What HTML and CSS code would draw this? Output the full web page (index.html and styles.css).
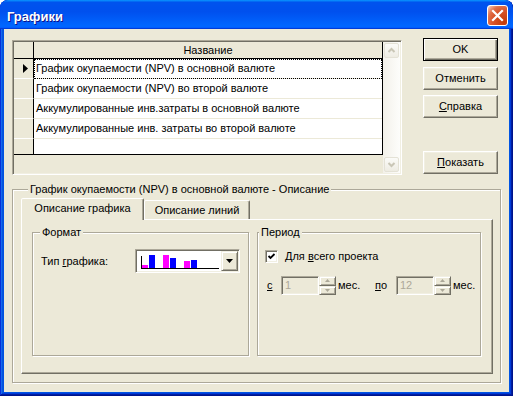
FILE: index.html
```html
<!DOCTYPE html>
<html lang="ru">
<head>
<meta charset="utf-8">
<title>Графики</title>
<link rel="stylesheet" href="styles.css">
</head>
<body>
<div class="window">
  <div class="titlebar">
    <span class="title">Графики</span>
    <span class="close">
      <svg width="19" height="19" viewBox="0 0 19 19"><path d="M5 5 L14 14 M14 5 L5 14" stroke="#fff" stroke-width="2.2" stroke-linecap="square"/></svg>
    </span>
  </div>
  <div class="client">
    <div class="top">
      <div class="dbgrid">
        <div class="grid-area">
          <div class="grid-table">
            <div class="row hdr"><div class="ind"></div><div class="cell hcell">Название</div></div>
            <div class="row"><div class="ind"><svg width="19" height="19" viewBox="0 0 19 19"><polygon points="9,5 14,9.5 9,14" fill="#000"/></svg></div><div class="cell focus">График окупаемости (NPV) в основной валюте</div></div>
            <div class="row"><div class="ind"></div><div class="cell">График окупаемости (NPV) во второй валюте</div></div>
            <div class="row"><div class="ind"></div><div class="cell">Аккумулированные инв.затраты в основной валюте</div></div>
            <div class="row"><div class="ind"></div><div class="cell">Аккумулированные инв. затраты во второй валюте</div></div>
            <div class="row empty"><div class="ind"></div><div class="cell"></div></div>
          </div>
        </div>
        <div class="vscroll">
          <div class="sbtn"><div class="sface"><svg width="13" height="13" viewBox="0 0 13 13"><polyline points="3.5,8 6.5,5 9.5,8" fill="none" stroke="#c9c6b6" stroke-width="2"/></svg></div></div>
          <div class="track"></div>
          <div class="sbtn"><div class="sface"><svg width="13" height="13" viewBox="0 0 13 13"><polyline points="3.5,5 6.5,8 9.5,5" fill="none" stroke="#c9c6b6" stroke-width="2"/></svg></div></div>
        </div>
      </div>
      <div class="buttons">
        <button class="btn default">OK</button>
        <button class="btn">Отменить</button>
        <button class="btn"><u>С</u>правка</button>
        <button class="btn bottom"><u>П</u>оказать</button>
      </div>
    </div>

    <div class="group main-group">
      <div class="group-title">График окупаемости (NPV) в основной валюте - Описание</div>
      <div class="tabs">
        <div class="tab active tab1">Описание графика</div>
        <div class="tab tab2">Описание линий</div>
      </div>
      <div class="panel">
        <div class="group fmt">
          <div class="group-title">Формат</div>
          <div class="fmt-row">
            <span class="lbl-type">Тип <u>г</u>рафика:</span>
            <div class="combo">
              <div class="combo-field">
                <svg width="84" height="20" viewBox="0 0 84 20">
                  <rect x="4" y="5" width="1" height="13" fill="#000"/>
                  <rect x="4" y="17" width="78" height="1" fill="#000"/>
                  <rect x="5" y="14" width="6" height="3" fill="#ff00ff"/>
                  <rect x="12" y="4" width="6" height="13" fill="#0000ff"/>
                  <rect x="26" y="4" width="6" height="13" fill="#ff00ff"/>
                  <rect x="33" y="7" width="6" height="10" fill="#0000ff"/>
                  <rect x="47" y="10" width="6" height="7" fill="#ff00ff"/>
                  <rect x="54" y="9" width="6" height="8" fill="#0000ff"/>
                </svg>
              </div>
              <div class="combo-btn"><svg width="7" height="4" viewBox="0 0 7 4"><polygon points="0,0 7,0 3.5,4" fill="#000"/></svg></div>
            </div>
          </div>
        </div>
        <div class="group period">
          <div class="group-title period-title">Период</div>
          <div class="check-row">
            <span class="checkbox"><svg width="9" height="9" viewBox="0 0 9 9"><polyline points="1.5,4 3.5,6 7.5,2" fill="none" stroke="#000" stroke-width="1.8"/></svg></span>
            <span class="check-label">Для <u>в</u>сего проекта</span>
          </div>
          <div class="range-row">
            <span class="lbl-from"><u>с</u></span>
            <span class="edit">1</span>
            <span class="spin">
              <span class="spin-btn"><svg width="5" height="3" viewBox="0 0 5 3"><polygon points="0,3 5,3 2.5,0" fill="#aca899"/></svg></span>
              <span class="spin-btn"><svg width="5" height="3" viewBox="0 0 5 3"><polygon points="0,0 5,0 2.5,3" fill="#aca899"/></svg></span>
            </span>
            <span class="lbl-mes">мес.</span>
            <span class="lbl-to"><u>п</u>о</span>
            <span class="edit">12</span>
            <span class="spin">
              <span class="spin-btn"><svg width="5" height="3" viewBox="0 0 5 3"><polygon points="0,3 5,3 2.5,0" fill="#aca899"/></svg></span>
              <span class="spin-btn"><svg width="5" height="3" viewBox="0 0 5 3"><polygon points="0,0 5,0 2.5,3" fill="#aca899"/></svg></span>
            </span>
            <span class="lbl-mes2">мес.</span>
          </div>
        </div>
      </div>
    </div>
  </div>
</div>
</body>
</html>
```

FILE: styles.css
```css
* { box-sizing: border-box; }
html, body { margin: 0; padding: 0; }
body {
  width: 513px;
  height: 396px;
  overflow: hidden;
  background: #fff;
  font-family: "Liberation Sans", Arial, sans-serif;
  font-size: 11px;
  line-height: 13px;
  color: #000;
}
u { text-decoration: underline; text-underline-offset: 1px; }

.window {
  width: 513px;
  height: 396px;
  display: flex;
  flex-direction: column;
  background: #0054e3;
  border-radius: 8px 8px 0 0;
  overflow: hidden;
  box-shadow: inset -1px -1px #00138c, inset 1px 1px #0831d9, inset -2px -2px #001ea0, inset 2px 2px #166aee, inset -3px -3px #003bda, inset 3px 3px #0855dd;
}

.titlebar {
  flex: none;
  height: 29px;
  display: flex;
  align-items: flex-start;
  justify-content: space-between;
  padding: 0 5px 0 7px;
  border-radius: 8px 8px 0 0;
  background: linear-gradient(180deg, #0997ff 0%, #0053ee 8%, #0050ee 40%, #0066ff 88%, #0066ff 93%, #005bff 95%, #003dd7 96%, #003dd7 100%);
}
.title {
  margin-top: 9px;
  color: #fff;
  font: bold 13px/15px "Liberation Sans", Arial, sans-serif;
  text-shadow: 1px 1px #0f1089;
}
.close {
  margin-top: 5px;
  width: 21px;
  height: 21px;
  border: 1px solid #fff;
  border-radius: 3px;
  display: flex;
  align-items: center;
  justify-content: center;
  background: radial-gradient(circle at 85% 85%, #c23a08 0%, #d8542a 50%, #e0704a 72%, #f3b9a2 92%, #fff 100%);
}

.client {
  flex: 1;
  margin: 0 4px 4px;
  background: #ece9d8;
  display: flex;
  flex-direction: column;
}

/* top section */
.top {
  display: flex;
  align-items: flex-start;
  padding: 9px 0 0 8px;
}
.dbgrid {
  margin-top: 2px;
  width: 390px;
  height: 135px;
  display: flex;
  border: 1px solid;
  border-color: #aca899 #fff #fff #aca899;
  padding: 1px;
  box-shadow: inset 1px 1px #716f64, inset -1px -1px #f1efe2;
  background: #ece9d8;
}
.grid-area {
  flex: 1;
  display: flex;
  flex-direction: column;
  background: #ece9d8;
}
.grid-table {
  background: #fff;
  border-right: 1px solid #000;
  border-bottom: 1px solid #000;
}
.row {
  display: flex;
  height: 20px;
}
.ind {
  flex: none;
  width: 20px;
  background: #ece9d8;
  border-right: 1px solid #000;
  border-bottom: 1px solid #fff;
  display: flex;
}
.cell {
  flex: 1;
  padding-left: 2px;
  display: flex;
  align-items: center;
  white-space: nowrap;
  border-bottom: 1px solid #ece9d8;
}
.row.hdr { height: 17px; }
.row.hdr .ind, .row.hdr .cell { border-bottom: 1px solid #000; }
.hcell {
  background: #ece9d8;
  justify-content: center;
  padding-left: 0;
}
.cell.focus {
  outline: 1px dotted #000;
  outline-offset: -1px;
}
.row.empty { height: 15px; }
.row.empty .ind, .row.empty .cell { border-bottom: none; }

.vscroll {
  flex: none;
  width: 17px;
  display: flex;
  flex-direction: column;
  background: linear-gradient(90deg, #f3f1ea, #fdfdfb);
}
.sbtn {
  height: 17px;
  padding: 1px;
  flex: none;
}
.sface {
  width: 100%;
  height: 100%;
  border: 1px solid #e4e2d6;
  border-radius: 2px;
  background: linear-gradient(180deg, #fbfbf8, #eeece3);
  display: flex;
  align-items: center;
  justify-content: center;
}
.track { flex: 1; }

.buttons {
  margin-left: 21px;
  width: 75px;
  height: 136px;
  display: flex;
  flex-direction: column;
  gap: 5px;
}
.btn {
  width: 75px;
  height: 23px;
  padding: 0;
  font: 11px/13px "Liberation Sans", Arial, sans-serif;
  color: #000;
  background: #ece9d8;
  border: 1px solid;
  border-color: #fff #716f64 #716f64 #fff;
  box-shadow: inset -1px -1px #aca899, inset 1px 1px #f1efe2;
}
.btn.default {
  margin-bottom: 1px;
  border-color: #000;
  box-shadow: inset 1px 1px #fff, inset -1px -1px #716f64, inset -2px -2px #aca899;
}
.btn.bottom { margin-top: auto; }

/* group boxes */
.group {
  border: 1px solid #aca899;
  box-shadow: inset 1px 1px #fff, 1px 1px #fff;
}
.group-title {
  width: fit-content;
  margin: -7px 0 0 7px;
  padding: 0 2px;
  line-height: 13px;
  background: #ece9d8;
  white-space: nowrap;
}
.main-group {
  margin: 14px 8px 0 8px;
  height: 194px;
  padding: 0 7px 8px 8px;
}

.tabs {
  position: relative;
  z-index: 1;
  display: flex;
  align-items: flex-end;
  height: 22px;
  margin-top: 2px;
  margin-bottom: -1px;
}
.tab {
  height: 19px;
  margin-bottom: 1px;
  border: 1px solid;
  border-bottom: none;
  border-color: #fff #716f64 transparent #fff;
  border-radius: 2px 2px 0 0;
  box-shadow: inset -1px 0 #aca899;
  background: #ece9d8;
  display: flex;
  align-items: center;
  justify-content: center;
  white-space: nowrap;
}
.tab.active {
  height: 22px;
  margin-bottom: 0;
  padding-bottom: 2px;
}
.tab1 { width: 123px; }
.tab2 { width: 106px; }

.panel {
  height: 155px;
  border: 1px solid;
  border-color: #fff #716f64 #716f64 #fff;
  box-shadow: inset -1px -1px #aca899;
  padding: 12px 10px 0 10px;
  display: flex;
  align-items: flex-start;
  gap: 8px;
}
.fmt { width: 217px; height: 124px; }
.period { width: 224px; height: 124px; }
.period-title { margin-left: 1px; }

.fmt-row {
  display: flex;
  align-items: center;
  margin: 10px 0 0 8px;
}
.lbl-type { width: 94px; flex: none; }
.combo {
  width: 105px;
  height: 24px;
  display: flex;
  border: 1px solid;
  border-color: #aca899 #fff #fff #aca899;
  padding: 1px;
  box-shadow: inset 1px 1px #716f64, inset -1px -1px #f1efe2;
  background: #fff;
}
.combo-field {
  flex: 1;
  background: #fff;
  display: flex;
}
.combo-btn {
  width: 17px;
  flex: none;
  background: #ece9d8;
  border: 1px solid;
  border-color: #f1efe2 #716f64 #716f64 #f1efe2;
  box-shadow: inset 1px 1px #fff, inset -1px -1px #aca899;
  display: flex;
  align-items: center;
  justify-content: center;
}

.check-row {
  display: flex;
  align-items: center;
  height: 13px;
  margin: 11px 0 0 7px;
}
.checkbox {
  width: 13px;
  height: 13px;
  flex: none;
  border: 1px solid;
  border-color: #aca899 #fff #fff #aca899;
  padding: 1px;
  box-shadow: inset 1px 1px #716f64, inset -1px -1px #f1efe2;
  background: #fff;
  display: flex;
  align-items: center;
  justify-content: center;
}
.check-label { margin-left: 7px; white-space: nowrap; }

.range-row {
  display: flex;
  align-items: center;
  height: 19px;
  margin: 13px 0 0 9px;
}
.lbl-from { width: 14px; flex: none; }
.edit {
  width: 38px;
  height: 19px;
  flex: none;
  border: 1px solid;
  border-color: #aca899 #fff #fff #aca899;
  box-shadow: inset 1px 1px #716f64, inset -1px -1px #f1efe2;
  background: #ece9d8;
  color: #aca899;
  padding: 2px 0 0 3px;
}
.spin {
  width: 17px;
  height: 19px;
  flex: none;
  display: flex;
  flex-direction: column;
}
.spin-btn {
  flex: 1;
  background: #ece9d8;
  border: 1px solid;
  border-color: #f1efe2 #716f64 #716f64 #f1efe2;
  box-shadow: inset 1px 1px #fff, inset -1px -1px #aca899;
  display: flex;
  align-items: center;
  justify-content: center;
}
.lbl-mes { width: 37px; flex: none; margin-left: 2px; }
.lbl-to { width: 21px; flex: none; }
.lbl-mes2 { margin-left: 2px; }
```
